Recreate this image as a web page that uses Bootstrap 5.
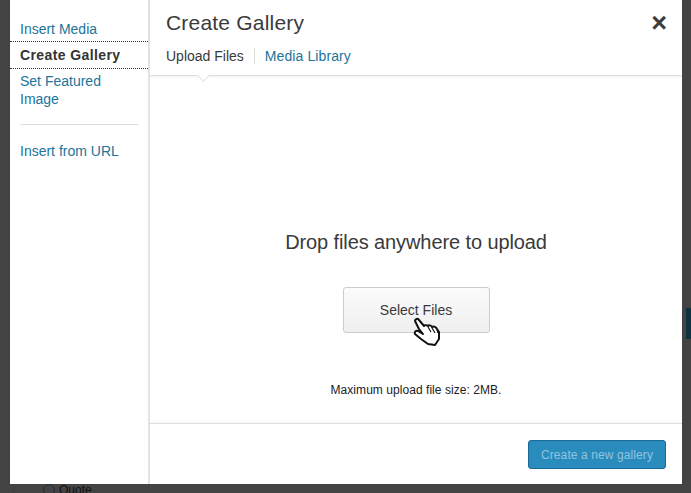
<!DOCTYPE html>
<html lang="en">
<head>
<meta charset="UTF-8" />
<title>Create Gallery</title>
<link href="https://cdn.jsdelivr.net/npm/bootstrap@5.3.0/dist/css/bootstrap.min.css" rel="stylesheet" />
<style>
  html, body { height: 493px; overflow: hidden; }
  body { background: #434343; font-family: "Liberation Sans", Arial, sans-serif; color: #3a3a3a; font-size: 14px; padding: 0 9px 0 10px; position: relative; }
  a { color: #21759b; text-decoration: none; }
  .wp-frame { height: 484px; background: #fff; }
  .wp-side { width: 138px; flex: none; padding-top: 20px; line-height: 18px; }
  .wp-side a { display: block; padding: 0 10px; margin-bottom: 8px; }
  .wp-side a:first-child { margin-bottom: 3px; }
  .wp-side .wp-current { font-weight: 700; color: #333; border-top: 1px dotted #333; border-bottom: 1px dotted #333; padding: 5px 10px; margin-bottom: 3px; line-height: 16px; letter-spacing: .4px; }
  .wp-sep { margin: 16px 10px 17px; border-top: 1px solid #ddd; }
  .wp-main { border-left: 2px solid #e4e4e4; min-width: 0; }
  .wp-head { height: 76px; border-bottom: 1px solid #ddd; padding: 9px 15px 0 16px; position: relative; box-shadow: 0 1px 2px rgba(0,0,0,.06); }
  .wp-title { font-size: 21px; line-height: 28px; margin: 0; font-weight: 400; letter-spacing: .2px; }
  .wp-close { color: #3c3c3c; font-size: 27px; line-height: 28px; font-weight: 700; }
  .wp-tabs { margin-top: 8px; line-height: 22px; }
  .wp-tabs span { padding-right: 10px; border-right: 1px solid #ddd; }
  .wp-tabs a { padding-left: 10px; letter-spacing: .1px; }
  .wp-caret { position: absolute; left: 49px; bottom: -5px; width: 9px; height: 9px; background: #fff; border-right: 1px solid #e2e2e2; border-bottom: 1px solid #e2e2e2; transform: rotate(45deg); }
  .wp-body { flex: 1; padding-top: 154px; position: relative; }
  .wp-drop { font-size: 20px; line-height: 24px; margin: 0 0 33px; font-weight: 400; letter-spacing: -.1px; }
  .wp-select { display: block; width: 147px; height: 46px; margin: 0 auto 49px; border: 1px solid #ccc; border-radius: 3px; background: linear-gradient(#fbfbfb, #efefef); color: #3a3a3a; font-size: 14px; }
  .wp-limit { font-size: 12px; line-height: 16px; color: #222; letter-spacing: .05px; }
  .wp-hand { position: absolute; left: 263px; top: 241px; }
  .wp-foot { height: 61px; flex: none; border-top: 1px solid #ddd; box-shadow: 0 -2px 2px rgba(0,0,0,.03); padding: 16px 16px 0 0; }
  .wp-create { width: 138px; height: 29px; padding: 0; background: #2a8bbd; border: 1px solid #1a6a95; border-radius: 3px; color: #8fc4e0; font-size: 12px; letter-spacing: .1px; }
  .wp-under { height: 9px; margin-left: 3px; padding-left: 29px; border-left: 1px solid #3d3d3d; color: #111; font-size: 12px; line-height: 12px; overflow: hidden; }
  .wp-radio { width: 12px; height: 12px; border: 1px solid #1c3040; border-radius: 50%; margin: 0 4px 0 0; flex: none; }
  .wp-dark { position: absolute; right: 0; top: 308px; width: 5px; height: 31px; background: #0d3240; }
</style>
</head>
<body>
  <div class="wp-frame d-flex">
    <div class="wp-side">
      <a href="#">Insert Media</a>
      <a href="#" class="wp-current">Create Gallery</a>
      <a href="#">Set Featured Image</a>
      <div class="wp-sep"></div>
      <a href="#">Insert from URL</a>
    </div>
    <div class="wp-main flex-grow-1 d-flex flex-column">
      <div class="wp-head">
        <div class="d-flex justify-content-between">
          <h1 class="wp-title">Create Gallery</h1>
          <span class="wp-close">&#215;</span>
        </div>
        <div class="wp-tabs"><span>Upload Files</span><a href="#">Media Library</a></div>
        <div class="wp-caret"></div>
      </div>
      <div class="wp-body text-center">
        <h2 class="wp-drop">Drop files anywhere to upload</h2>
        <button class="wp-select" type="button">Select Files</button>
        <div class="wp-limit">Maximum upload file size: 2MB.</div>
        <svg class="wp-hand" width="28" height="30" viewBox="0 0 28 30">
          <path d="M2 4C2 2 5 1 6 3l5 6c1-1 3-1 4 0 1-1 3-1 4 1 2-1 4 0 5 2l2 3v7l-4 6-7-1-7-5-6-5c-1-2 1-4 3-3l5 3L6 12z" fill="#fff" stroke="#111" stroke-width="2" stroke-linejoin="round"/>
          <path d="M15 10l3 5M19 11l3 5M24 13l1 3" fill="none" stroke="#111" stroke-width="1.2"/>
        </svg>
      </div>
      <div class="wp-foot d-flex justify-content-end align-items-start">
        <button class="wp-create" type="button">Create a new gallery</button>
      </div>
    </div>
  </div>
  <div class="wp-under d-flex"><span class="wp-radio"></span>Quote</div>
  <div class="wp-dark"></div>
</body>
</html>
